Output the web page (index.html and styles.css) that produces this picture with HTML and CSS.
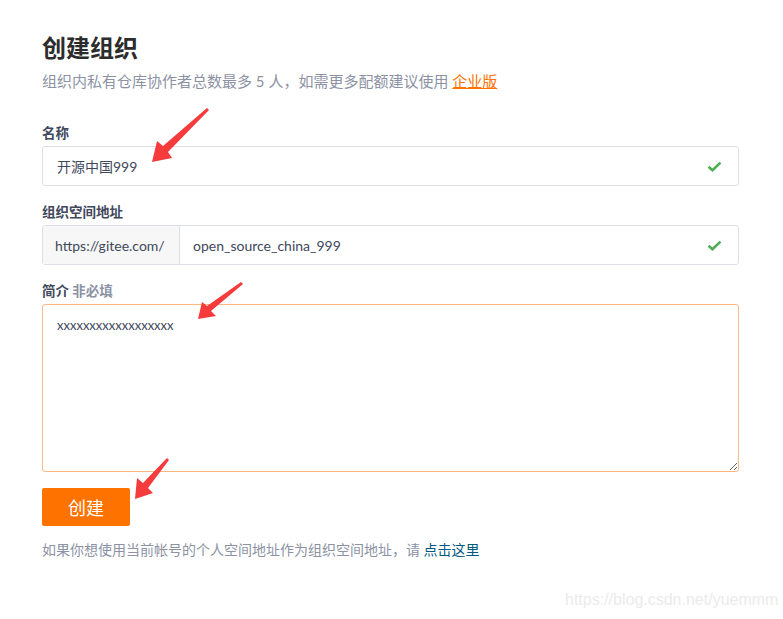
FILE: index.html
```html
<!DOCTYPE html>
<html lang="zh">
<head>
<meta charset="utf-8">
<title>创建组织</title>
<link rel="stylesheet" href="styles.css">
</head>
<body>
<div class="page">
  <h1 class="title">创建组织</h1>
  <p class="subtitle">组织内私有仓库协作者总数最多 5 人，如需更多配额建议使用 <a class="link-orange" href="#">企业版</a></p>

  <div class="field">
    <div class="label">名称</div>
    <div class="input">
      <span class="value">开源中国999</span>
      <svg class="check" viewBox="0 0 16 12" width="15" height="11"><path d="M1.5 6.2 L5.8 10 L14.5 1.8" fill="none" stroke="#4caf50" stroke-width="2.8"/></svg>
    </div>
  </div>

  <div class="field">
    <div class="label">组织空间地址</div>
    <div class="input addon">
      <span class="prefix">https://gitee.com/</span>
      <span class="value value-url">open_source_china_999</span>
      <svg class="check" viewBox="0 0 16 12" width="15" height="11"><path d="M1.5 6.2 L5.8 10 L14.5 1.8" fill="none" stroke="#4caf50" stroke-width="2.8"/></svg>
    </div>
  </div>

  <div class="field">
    <div class="label">简介 <span class="optional">非必填</span></div>
    <textarea class="textarea">xxxxxxxxxxxxxxxxxx</textarea>
  </div>

  <button class="btn">创建</button>

  <p class="footer">如果你想使用当前帐号的个人空间地址作为组织空间地址，请 <a class="link-blue" href="#">点击这里</a></p>
</div>

<svg class="arrows" width="783" height="619" viewBox="0 0 783 619">
  <polygon points="152,162 157,141 163,146 207,108 209,110 168,152 172,158" fill="#f53b3b"/>
  <polygon points="198,319 202,302 207,306 241,282 243,284 211,311 216,316" fill="#f53b3b"/>
  <polygon points="135,499 137,478 143,483 167,458 169,460 148,488 153,493" fill="#f53b3b"/>
</svg>
<div class="watermark">https://blog.csdn.net/yuemmm</div>
</body>
</html>
```
FILE: styles.css
```css
html, body {
  margin: 0;
  padding: 0;
  background: #ffffff;
}
body {
  font-family: "Lato", "Noto Sans CJK SC", sans-serif;
  color: #40485b;
  width: 783px;
  height: 619px;
  position: relative;
  overflow: hidden;
}
.page {
  padding: 32px 0 0 42px;
  width: 697px;
}
.title {
  margin: 0;
  font-size: 24px;
  line-height: 32px;
  font-weight: 700;
  color: #2c2c2c;
}
.subtitle {
  margin: 6px 0 0;
  font-size: 15px;
  line-height: 22px;
  color: #8c92a4;
}
.link-orange {
  color: #fe7300;
  text-decoration: underline;
}
.field {
  margin-top: 30px;
}
.field + .field {
  margin-top: 15px;
}
.label {
  font-size: 13.5px;
  line-height: 22px;
  font-weight: 700;
  color: #40485b;
  margin-bottom: 2px;
}
.optional {
  color: #8c92a4;
}
.input {
  box-sizing: border-box;
  height: 40px;
  border: 1px solid #dcdfe6;
  border-radius: 3px;
  display: flex;
  align-items: center;
  padding: 0 16px 0 14px;
  font-size: 14px;
  color: #40485b;
}
.input .value {
  flex: 1;
}
.addon {
  padding-left: 0;
}
.prefix {
  box-sizing: border-box;
  width: 137px;
  height: 38px;
  display: flex;
  align-items: center;
  padding-left: 12px;
  background: #f7f7f7;
  border-right: 1px solid #dcdfe6;
  color: #40485b;
}
.value-url {
  padding-left: 13px;
}
.check {
  display: block;
}
.textarea {
  display: block;
  box-sizing: border-box;
  width: 697px;
  height: 168px;
  margin: 0;
  border: 1px solid #f9b983;
  border-radius: 3px;
  padding: 10px 14px;
  font-family: "Lato", "Noto Sans CJK SC", sans-serif;
  font-size: 13px;
  line-height: 20px;
  color: #40485b;
  outline: none;
  resize: vertical;
}
.btn {
  display: block;
  margin-top: 16px;
  width: 88px;
  height: 38px;
  border: none;
  border-radius: 2px;
  background: #fe7300;
  color: #ffffff;
  font-family: "Noto Sans CJK SC", sans-serif;
  font-size: 18px;
  padding: 0;
}
.footer {
  margin: 13px 0 0;
  font-size: 14px;
  line-height: 22px;
  color: #8c92a4;
}
.link-blue {
  color: #005980;
  text-decoration: none;
}
.arrows {
  position: absolute;
  left: 0;
  top: 0;
  pointer-events: none;
}
.watermark {
  position: absolute;
  left: 565px;
  top: 589px;
  font-family: "Liberation Sans", sans-serif;
  font-size: 16px;
  line-height: 22px;
  color: #ebebeb;
}
```
